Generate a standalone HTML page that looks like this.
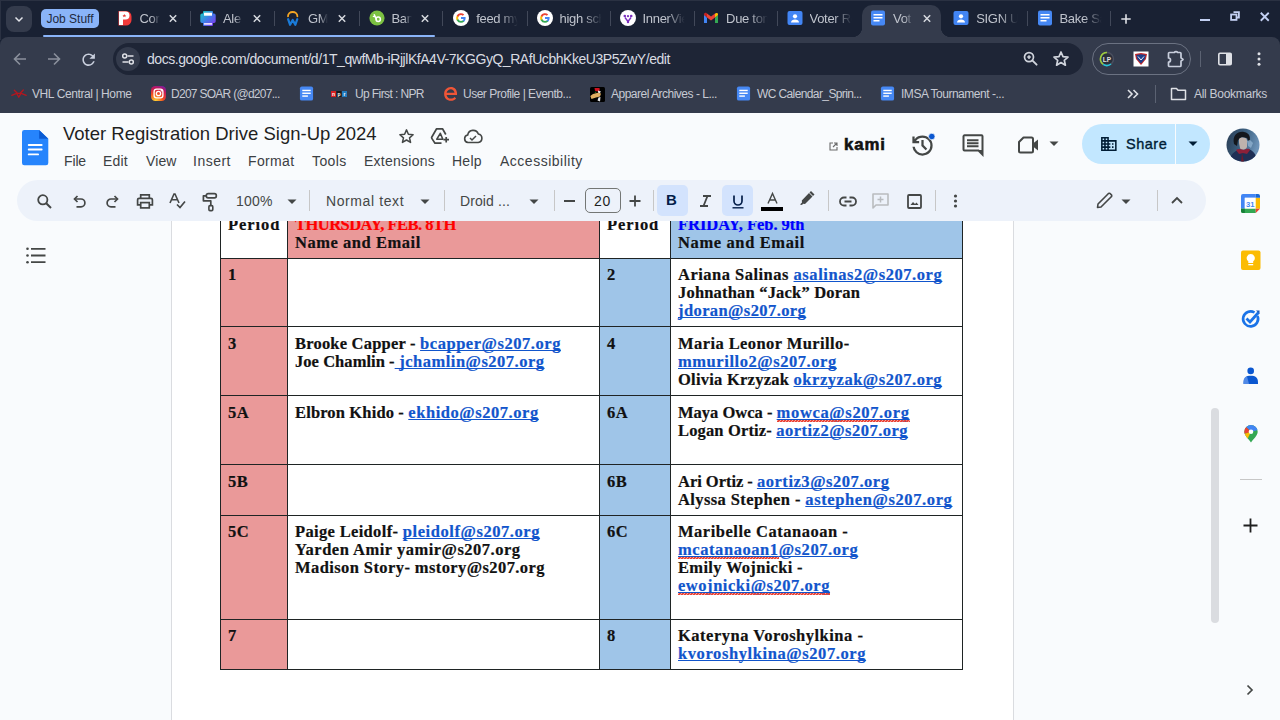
<!DOCTYPE html>
<html><head><meta charset="utf-8">
<style>
*{box-sizing:border-box}
html,body{margin:0;padding:0}
body{width:1280px;height:720px;overflow:hidden;position:relative;background:#f9fbfd;font-family:"Liberation Sans",sans-serif}
.a{position:absolute}
svg{position:absolute;overflow:visible}
#tabs{left:0;top:0;width:1280px;height:45px;background:#192133}
.tt{position:absolute;top:11px;font-size:13px;letter-spacing:-0.3px;color:#bfc3cc;white-space:nowrap;overflow:hidden;line-height:16px}
.fade{-webkit-mask-image:linear-gradient(to right,#000 55%,transparent 95%)}
.sep{position:absolute;top:11px;width:1px;height:15px;background:#414859}
.x{position:absolute;top:11px;width:14px;height:14px}
#tb{left:0;top:37px;width:1280px;height:76px;background:#343b4c;border-top-left-radius:8px;border-top-right-radius:8px}
#omni{left:113px;top:43px;width:970px;height:32px;border-radius:16px;background:#1e2536}
.bm{position:absolute;top:87px;font-size:12px;color:#c7cad3;white-space:nowrap;line-height:15px}
.menu{position:absolute;top:153px;font-size:14px;color:#3c4043;line-height:16px}
#pill{left:17px;top:180px;width:1189px;height:41px;border-radius:21px;background:#edf2fa}
.ic{position:absolute}
.tsep{position:absolute;top:190px;width:1px;height:21px;background:#c7c7c7}
#page{left:171px;top:221px;width:843px;height:499px;background:#fff;border-left:1px solid #dadce0;border-right:1px solid #dadce0}
.doc{font-family:"Liberation Serif",serif;font-weight:bold;font-size:16.5px;letter-spacing:0.62px;color:#111;line-height:18px;white-space:nowrap;-webkit-text-stroke:0.2px currentColor}
.lnk{color:#1155cc;text-decoration:underline;text-decoration-thickness:1px;text-underline-offset:1px;text-decoration-skip-ink:none}
.sq{position:relative}
.sq::after{content:"";position:absolute;left:0;right:0;bottom:-0.5px;height:2px;background:linear-gradient(135deg,transparent 30%,#ea4335 30%,#ea4335 70%,transparent 70%) 0 0/3px 2px repeat-x,linear-gradient(45deg,transparent 30%,#ea4335 30%,#ea4335 70%,transparent 70%) 1.5px 0/3px 2px repeat-x}
</style></head><body>

<!-- TAB STRIP -->
<div id="tabs" class="a">
  <div class="a" style="left:6px;top:6px;width:26px;height:26px;border-radius:8px;background:#343b4c"></div>
  <svg style="left:13px;top:13px" width="12" height="12" viewBox="0 0 12 12"><path d="M2.5 4.5 L6 8 L9.5 4.5" fill="none" stroke="#e3e5ea" stroke-width="1.5"/></svg>
  <div class="a" style="left:41px;top:9px;width:58px;height:19px;border-radius:5px;background:#8ab4f8"></div>
  <div class="a" style="left:41px;top:10px;width:58px;text-align:center;font-size:12px;line-height:18px;color:#1f2a3d">Job Stuff</div>
  <div class="a" style="left:43px;top:35px;width:392px;height:2px;background:#8ab4f8;border-radius:1px"></div>
<!--TABS-->
<div class="a" style="left:862px;top:5px;width:79px;height:32px;background:#343b4c;border-radius:10px 10px 0 0"></div>
<div class="a" style="left:852px;top:27px;width:10px;height:10px;background:radial-gradient(circle at 0 0,transparent 10px,#343b4c 10.5px)"></div>
<div class="a" style="left:941px;top:27px;width:10px;height:10px;background:radial-gradient(circle at 100% 0,transparent 10px,#343b4c 10.5px)"></div>
<div class="a" style="left:116.5px;top:10px;width:16px;height:16px"><svg width="16" height="16" viewBox="0 0 16 16"><path d="M1.5 1H9A5.5 5.500 0 0 1 14.500 6.500V10A5.500 5.500 0 0 1 9 15.500H1.500Z" fill="#f23a3a"/><path d="M2 1.500H8.500A4 4 0 0 1 8.500 9.500H6V15H2Z" fill="#fff"/><path d="M7.300 4L8 5.200H9.300L8.300 6L8.700 7.200L7.300 6.500L6 7.200L6.400 6L5.400 5.200H6.700Z" fill="#e53935"/></svg></div>
<div class="tt fade" style="left:139.5px;width:21px">Cor</div>
<svg class="x" style="left:166.0px" viewBox="0 0 14 14"><path d="M3.8 4.3L10.2 10.7M10.2 4.3L3.8 10.7" stroke="#d5d8de" stroke-width="1.5"/></svg>
<div class="sep" style="left:190px"></div>
<div class="a" style="left:200px;top:10px;width:16px;height:16px"><svg width="16" height="16" viewBox="0 0 16 16"><defs><linearGradient id="ga" x1="0" y1="0" x2="1" y2="1"><stop offset="0" stop-color="#12d6c0"/><stop offset="0.5" stop-color="#3f7be8"/><stop offset="1" stop-color="#8b2cf0"/></linearGradient></defs><path d="M4 1H12A1 1 0 0 1 13 2V3.500H14A1.700 1.700 0 0 1 15.700 5.200V11.300A1.700 1.700 0 0 1 14 13H13V15A1 1 0 0 1 12 16H4A1 1 0 0 1 3 15V13H2A1.700 1.700 0 0 1 0.300 11.300V5.200A1.700 1.700 0 0 1 2 3.500H3V2A1 1 0 0 1 4 1Z" fill="url(#ga)"/><rect x="4" y="2.700" width="8" height="3" fill="#fff"/><rect x="4" y="13" width="8" height="1.800" fill="#e6d8ff"/></svg></div>
<div class="tt fade" style="left:223px;width:21px">Ale</div>
<svg class="x" style="left:249.5px" viewBox="0 0 14 14"><path d="M3.8 4.3L10.2 10.7M10.2 4.3L3.8 10.7" stroke="#d5d8de" stroke-width="1.5"/></svg>
<div class="sep" style="left:274px"></div>
<div class="a" style="left:285px;top:10px;width:16px;height:16px"><svg width="16" height="16" viewBox="0 0 16 16"><path d="M3 6.300A4.700 4.300 0 0 1 12.400 6.300" fill="none" stroke="#f5a623" stroke-width="1.800" stroke-linecap="round"/><path d="M3.100 9.200L5.100 14.800L7.700 10L10.300 14.800L12.300 9.200" fill="none" stroke="#1a7bd8" stroke-width="2.200" stroke-linecap="round" stroke-linejoin="round"/></svg></div>
<div class="tt fade" style="left:308px;width:21px">GM</div>
<svg class="x" style="left:334.5px" viewBox="0 0 14 14"><path d="M3.8 4.3L10.2 10.7M10.2 4.3L3.8 10.7" stroke="#d5d8de" stroke-width="1.5"/></svg>
<div class="sep" style="left:359px"></div>
<div class="a" style="left:368.5px;top:10px;width:16px;height:16px"><svg width="16" height="16" viewBox="0 0 16 16"><circle cx="8" cy="8" r="7.600" fill="#7cc142"/><path d="M5.300 4.800L7.400 9.200" stroke="#fff" stroke-width="1.500" stroke-linecap="round"/><path d="M5.500 6.600L4.300 6.400" stroke="#fff" stroke-width="1.200" stroke-linecap="round"/><circle cx="9.200" cy="9.300" r="2.200" fill="none" stroke="#fff" stroke-width="1.500"/></svg></div>
<div class="tt fade" style="left:391.5px;width:21px">Ban</div>
<svg class="x" style="left:418.0px" viewBox="0 0 14 14"><path d="M3.8 4.3L10.2 10.7M10.2 4.3L3.8 10.7" stroke="#d5d8de" stroke-width="1.5"/></svg>
<div class="sep" style="left:442px"></div>
<div class="a" style="left:453.2px;top:10px;width:16px;height:16px"><svg width="16" height="16" viewBox="0 0 16 16"><circle cx="8" cy="8" r="8" fill="#fff"/><path d="M12.6 8.1c0-.4 0-.7-.1-1H8v1.9h2.6a2.3 2.3 0 0 1-1 1.5v1.2h1.6c.9-.9 1.4-2.1 1.4-3.6z" fill="#4285f4"/><path d="M8 12.8c1.3 0 2.4-.4 3.2-1.2l-1.6-1.2c-.4.3-1 .5-1.6.5-1.2 0-2.3-.8-2.7-2H3.7v1.3A4.8 4.8 0 0 0 8 12.8z" fill="#34a853"/><path d="M5.3 8.9a2.9 2.9 0 0 1 0-1.8V5.8H3.7a4.8 4.8 0 0 0 0 4.4z" fill="#fbbc05"/><path d="M8 5.1c.7 0 1.3.2 1.8.7l1.4-1.4A4.8 4.8 0 0 0 3.7 5.8l1.6 1.3c.4-1.2 1.5-2 2.7-2z" fill="#ea4335"/></svg></div>
<div class="tt fade" style="left:476.2px;width:44px">feed my</div>
<div class="sep" style="left:527px"></div>
<div class="a" style="left:536.5px;top:10px;width:16px;height:16px"><svg width="16" height="16" viewBox="0 0 16 16"><circle cx="8" cy="8" r="8" fill="#fff"/><path d="M12.6 8.1c0-.4 0-.7-.1-1H8v1.9h2.6a2.3 2.3 0 0 1-1 1.5v1.2h1.6c.9-.9 1.4-2.1 1.4-3.6z" fill="#4285f4"/><path d="M8 12.8c1.3 0 2.4-.4 3.2-1.2l-1.6-1.2c-.4.3-1 .5-1.6.5-1.2 0-2.3-.8-2.7-2H3.7v1.3A4.8 4.8 0 0 0 8 12.8z" fill="#34a853"/><path d="M5.3 8.9a2.9 2.9 0 0 1 0-1.8V5.8H3.7a4.8 4.8 0 0 0 0 4.4z" fill="#fbbc05"/><path d="M8 5.1c.7 0 1.3.2 1.8.7l1.4-1.4A4.8 4.8 0 0 0 3.7 5.8l1.6 1.3c.4-1.2 1.5-2 2.7-2z" fill="#ea4335"/></svg></div>
<div class="tt fade" style="left:559.5px;width:44px">high sch</div>
<div class="sep" style="left:610px"></div>
<div class="a" style="left:619.5px;top:10px;width:16px;height:16px"><svg width="16" height="16" viewBox="0 0 16 16"><circle cx="8" cy="8" r="8" fill="#fff"/><circle cx="4.8" cy="6" r="1.3" fill="#7b2fbf"/><circle cx="11.2" cy="6" r="1.3" fill="#7b2fbf"/><circle cx="8" cy="6.2" r="1.1" fill="#7b2fbf"/><path d="M5 7.5L8 11.5L11 7.5" fill="none" stroke="#7b2fbf" stroke-width="1.4"/><circle cx="8" cy="12" r="1.2" fill="#7b2fbf"/></svg></div>
<div class="tt fade" style="left:642.5px;width:44px">InnerVie</div>
<div class="sep" style="left:694px"></div>
<div class="a" style="left:703.1px;top:10px;width:16px;height:16px"><svg width="16" height="16" viewBox="0 0 16 16"><path d="M1 4.5V13h3V7.5z" fill="#4285f4"/><path d="M12 7.5V13h3V4.5z" fill="#34a853"/><path d="M12 3.5v4l3-2.5V4.2c0-1.1-1.3-1.7-2.1-1z" fill="#fbbc04"/><path d="M4 7.5v-4L8 6.5l4-3v4L8 10.5z" fill="#ea4335"/><path d="M1 4.2V5l3 2.5v-4l-.9-.7C2.300 2.500 1 3.100 1 4.200z" fill="#c5221f"/></svg></div>
<div class="tt fade" style="left:726.1px;width:44px">Due tom</div>
<div class="sep" style="left:777px"></div>
<div class="a" style="left:786.5px;top:10px;width:16px;height:16px"><svg width="16" height="16" viewBox="0 0 16 16"><rect x="0.5" y="1" width="15" height="14" rx="2" fill="#4285f4"/><circle cx="8" cy="6.3" r="2.1" fill="#fff"/><path d="M4 12.5c0-2 1.8-3 4-3s4 1 4 3z" fill="#fff"/></svg></div>
<div class="tt fade" style="left:809.5px;width:44px">Voter Re</div>
<div class="a" style="left:870px;top:10px;width:16px;height:16px"><svg width="16" height="16" viewBox="0 0 16 16"><rect x="1" y="0.5" width="14" height="15" rx="2" fill="#4688f4"/><rect x="3.5" y="4" width="9" height="1.5" fill="#fff"/><rect x="3.5" y="7" width="9" height="1.5" fill="#fff"/><rect x="3.5" y="10" width="6" height="1.5" fill="#fff"/></svg></div>
<div class="tt fade" style="left:893px;width:21px">Vot</div>
<svg class="x" style="left:919.5px" viewBox="0 0 14 14"><path d="M3.8 4.3L10.2 10.7M10.2 4.3L3.8 10.7" stroke="#d5d8de" stroke-width="1.5"/></svg>
<div class="a" style="left:953.2px;top:10px;width:16px;height:16px"><svg width="16" height="16" viewBox="0 0 16 16"><rect x="0.5" y="1" width="15" height="14" rx="2" fill="#4285f4"/><circle cx="8" cy="6.3" r="2.1" fill="#fff"/><path d="M4 12.5c0-2 1.8-3 4-3s4 1 4 3z" fill="#fff"/></svg></div>
<div class="tt fade" style="left:976.2px;width:44px">SIGN UP</div>
<div class="sep" style="left:1027px"></div>
<div class="a" style="left:1036.5px;top:10px;width:16px;height:16px"><svg width="16" height="16" viewBox="0 0 16 16"><rect x="1" y="0.5" width="14" height="15" rx="2" fill="#4688f4"/><rect x="3.5" y="4" width="9" height="1.5" fill="#fff"/><rect x="3.5" y="7" width="9" height="1.5" fill="#fff"/><rect x="3.5" y="10" width="6" height="1.5" fill="#fff"/></svg></div>
<div class="tt fade" style="left:1059.5px;width:44px">Bake Sa</div>
<div class="sep" style="left:1110px"></div>
<!--/TABS-->
<div class="a" style="left:0;top:0;width:1280px;height:1px;background:#2a3142"></div>
<div class="a" style="left:0;top:0;width:1px;height:40px;background:#2a3142"></div>

<!-- window controls -->
<svg style="left:1121px;top:13.5px" width="10" height="10" viewBox="0 0 10 10"><path d="M5 0.300V9.700M0.300 5H9.700" stroke="#dfe1e6" stroke-width="1.600"/></svg>
<div class="a" style="left:1200px;top:18.5px;width:10px;height:2px;background:#c3d0f3"></div>
<svg style="left:1230px;top:11px" width="10" height="10" viewBox="0 0 10 10"><path d="M3.500 1.100H8.900V6.500H6.500" fill="none" stroke="#c3d0f3" stroke-width="1.800"/><rect x="1.100" y="3.500" width="5.400" height="5.400" fill="none" stroke="#c3d0f3" stroke-width="1.800"/></svg>
<svg style="left:1260px;top:11.5px" width="9.500" height="9.500" viewBox="0 0 10 10"><path d="M0.800 0.800L9.200 9.200M9.200 0.800L0.800 9.200" stroke="#c3d0f3" stroke-width="1.900"/></svg>
<!--/WIN-->
</div>

<!-- TOOLBAR -->

<div id="tb" class="a"></div>
<div id="omni" class="a"></div>
<!-- nav icons -->
<svg style="left:12px;top:51px" width="16" height="16" viewBox="0 0 16 16"><path d="M14 8H2.5M8 2.5L2.5 8L8 13.5" fill="none" stroke="#8a909c" stroke-width="1.6"/></svg>
<svg style="left:46px;top:51px" width="16" height="16" viewBox="0 0 16 16"><path d="M2 8H13.5M8 2.5L13.5 8L8 13.5" fill="none" stroke="#8a909c" stroke-width="1.6"/></svg>
<svg style="left:81.5px;top:52.5px" width="13.3" height="13.3" viewBox="3.500 3.500 17 17"><path d="M17.650 6.350A7.958 7.958 0 0 0 12 4c-4.420 0-7.990 3.580-7.990 8s3.570 8 7.990 8c3.730 0 6.840-2.550 7.730-6h-2.080A5.990 5.990 0 0 1 12 18c-3.310 0-6-2.690-6-6s2.690-6 6-6c1.660 0 3.140.690 4.220 1.780L13 11h7V4l-2.350 2.350z" fill="#c9cfdd"/></svg>
<div class="a" style="left:116px;top:47px;width:24px;height:24px;border-radius:12px;background:#343b4c"></div>
<svg style="left:121px;top:52px" width="14" height="14" viewBox="0 0 14 14"><path d="M6.500 4H12.500M1.500 10H7.500" stroke="#dfe1e6" stroke-width="1.600"/><circle cx="3.700" cy="4" r="2" fill="none" stroke="#dfe1e6" stroke-width="1.500"/><circle cx="10.300" cy="10" r="2" fill="none" stroke="#dfe1e6" stroke-width="1.500"/></svg>
<div class="a" style="left:147px;top:51px;font-size:14px;letter-spacing:-0.45px;line-height:17px;color:#d9dce2;white-space:nowrap">docs.google.com/document/d/1T_qwfMb-iRjjlKfA4V-7KGGyQ_RAfUcbhKkeU3P5ZwY/edit</div>
<svg style="left:1021px;top:50px" width="18" height="18" viewBox="0 0 18 18"><circle cx="8" cy="7.100" r="4.500" fill="none" stroke="#d0d4dc" stroke-width="1.700"/><path d="M11.300 10.400L15.600 14.700" stroke="#d0d4dc" stroke-width="1.900" stroke-linecap="round"/><path d="M8 5.300V8.900M6.200 7.100H9.800" stroke="#d0d4dc" stroke-width="1.500"/></svg>
<svg style="left:1051.5px;top:50.3px" width="18" height="18" viewBox="0 0 18 18"><path d="M9 2L11 6.600L16 7.100L12.300 10.300L13.400 15.200L9 12.600L4.600 15.200L5.700 10.300L2 7.100L7 6.600Z" fill="none" stroke="#d0d4dc" stroke-width="1.700" stroke-linejoin="round"/></svg>
<div class="a" style="left:1092px;top:43px;width:99px;height:32px;border-radius:16px;border:1px solid #6b7282"></div>
<svg style="left:1099px;top:51px" width="16" height="16" viewBox="0 0 16 16"><circle cx="8" cy="8" r="6.5" fill="#2a2f3a" stroke="#4b5060" stroke-width="1.4"/><path d="M8 1.5A6.5 6.5 0 0 0 4.2 13.3" fill="none" stroke="#9ccc3c" stroke-width="1.6"/><path d="M4.2 13.3A6.5 6.5 0 0 0 12 13" fill="none" stroke="#26c6da" stroke-width="1.6"/><text x="8" y="10.5" font-size="6.5" font-family="Liberation Sans" font-weight="bold" fill="#e0e0e0" text-anchor="middle">LP</text></svg>
<svg style="left:1133px;top:51px" width="16" height="16" viewBox="0 0 16 16"><rect x="0.5" y="0.5" width="15" height="15" fill="#fff"/><path d="M2 3L8 2L14 3L13 8L8 14L3 8Z" fill="#c62828"/><path d="M3.3 4L8 3.2L12.7 4L11.8 8L8 12.5L4.2 8Z" fill="#1e3f8a"/><path d="M5 5.5L8 9L11 5.5" fill="none" stroke="#fff" stroke-width="0.9"/></svg>
<svg style="left:1166px;top:50px" width="18" height="18" viewBox="0 0 18 18"><path d="M3.500 2.500H8.300A2 2 0 0 1 11.700 2.500H14A1 1 0 0 1 15 3.500V7.800L17 9.500L15 11.200V15.500A1 1 0 0 1 14 16.500H3.500A1 1 0 0 1 2.500 15.500V12A1.600 1.600 0 0 0 2.500 8V3.500A1 1 0 0 1 3.500 2.500Z" fill="none" stroke="#c9cfdd" stroke-width="1.700" stroke-linejoin="round"/></svg>
<div class="a" style="left:1200px;top:51px;width:1px;height:16px;background:#5b6272"></div>
<svg style="left:1217px;top:51px" width="16" height="16" viewBox="0 0 16 16"><rect x="1.8" y="2.3" width="12.4" height="11.4" rx="1.2" fill="none" stroke="#dfe1e6" stroke-width="1.6"/><rect x="9" y="2.3" width="5.2" height="11.4" fill="#dfe1e6"/></svg>
<svg style="left:1251px;top:51px" width="16" height="16" viewBox="0 0 16 16"><circle cx="8" cy="2.8" r="1.5" fill="#dfe1e6"/><circle cx="8" cy="8" r="1.5" fill="#dfe1e6"/><circle cx="8" cy="13.2" r="1.5" fill="#dfe1e6"/></svg>
<!--BM-->
<div class="a" style="left:11px;top:86px;width:16px;height:16px"><svg width="16" height="16" viewBox="0 0 16 16"><path d="M3.300 4.300L6.300 7.300M12.300 4L9.300 7.300M0.800 9.300L5.600 7.400M15.200 9.300L10.200 7.400" stroke="#b5161e" stroke-width="1.300" stroke-linecap="round"/><path d="M5.600 7.300H10L7.800 11.300Z" fill="none" stroke="#b5161e" stroke-width="1.300" stroke-linejoin="round"/></svg></div>
<div class="bm" style="left:32px;letter-spacing:-0.4px">VHL Central | Home</div>
<div class="a" style="left:151px;top:86px;width:16px;height:16px"><svg width="15" height="15" viewBox="0 0 16 16"><defs><radialGradient id="gi" cx="0.3" cy="1" r="1.1"><stop offset="0" stop-color="#fdd835"/><stop offset="0.45" stop-color="#f4511e"/><stop offset="0.8" stop-color="#c2185b"/><stop offset="1" stop-color="#7b1fa2"/></radialGradient></defs><rect x="0" y="0" width="16" height="16" rx="4.5" fill="url(#gi)"/><rect x="3.3" y="3.3" width="9.4" height="9.4" rx="2.8" fill="none" stroke="#fff" stroke-width="1.4"/><circle cx="8" cy="8" r="2.3" fill="none" stroke="#fff" stroke-width="1.4"/><circle cx="11" cy="5" r=".8" fill="#fff"/></svg></div>
<div class="bm" style="left:171px;letter-spacing:-0.72px">D207 SOAR (@d207...</div>
<div class="a" style="left:299px;top:86px;width:16px;height:16px"><svg width="15" height="15" viewBox="0 0 16 16"><rect x="1" y="0.5" width="14" height="15" rx="2" fill="#4688f4"/><rect x="3.5" y="4" width="9" height="1.5" fill="#fff"/><rect x="3.5" y="7" width="9" height="1.5" fill="#fff"/><rect x="3.5" y="10" width="6" height="1.5" fill="#fff"/></svg></div>
<div class="a" style="left:331px;top:86px;width:16px;height:16px"><svg width="16" height="16" viewBox="0 0 16 16"><rect x="0" y="5" width="5" height="6" fill="#d62021"/><rect x="5.5" y="5" width="5" height="6" fill="#1a1a1a"/><rect x="11" y="5" width="5" height="6" fill="#237bbd"/><text x="2.5" y="9.8" font-size="5" fill="#fff" font-family="Liberation Sans" text-anchor="middle" font-weight="bold">n</text><text x="8" y="9.8" font-size="5" fill="#fff" font-family="Liberation Sans" text-anchor="middle" font-weight="bold">p</text><text x="13.5" y="9.8" font-size="5" fill="#fff" font-family="Liberation Sans" text-anchor="middle" font-weight="bold">r</text></svg></div>
<div class="bm" style="left:355px;letter-spacing:-0.6px">Up First : NPR</div>
<div class="a" style="left:443px;top:86px;width:16px;height:16px"><svg width="15" height="15" viewBox="0 0 16 16"><path d="M13.5 9.5H3.8C4.3 12 6.2 13.4 8.4 13.4C10 13.4 11.3 12.7 12.3 11.6L14 13.2C12.6 14.8 10.6 15.7 8.4 15.7C4.3 15.7 1.2 12.6 1.2 8.4S4.300 1.100 8.400 1.100C12.300 1.100 15 4 15 8.300C15 8.700 15 9.100 14.900 9.500ZM3.8 7.3H12.300C11.800 4.900 10.300 3.500 8.300 3.500S4.500 4.900 3.800 7.300Z" fill="#f05537"/></svg></div>
<div class="bm" style="left:463px;letter-spacing:-0.49px">User Profile | Eventb...</div>
<div class="a" style="left:590px;top:86.5px;width:16px;height:16px"><svg width="15" height="15" viewBox="0 0 15 15"><rect x="0" y="0" width="15" height="15" rx="1.500" fill="#000"/><path d="M4.500 1L9.500 1L9.800 3.500L7.500 4.500L5 3.800Z" fill="#d0101e"/><path d="M4.500 5L6.500 4.500L6 6Z" fill="#3c8a2e"/><path d="M8 3.500L11 4.500L9.500 6.500L8 5.500Z" fill="#e8e8e8"/><path d="M0.300 9L3 7L8 5.800L11 6.500L10 9.500L6 10.500L1.500 12Z" fill="#e0ae62"/><path d="M8.500 10.500L10.500 10L10 14.500L7.500 13.500Z" fill="#e8e8e8"/></svg></div>
<div class="bm" style="left:611px;letter-spacing:-0.5px">Apparel Archives - L...</div>
<div class="a" style="left:736px;top:86px;width:16px;height:16px"><svg width="15" height="15" viewBox="0 0 16 16"><rect x="1" y="0.5" width="14" height="15" rx="2" fill="#4688f4"/><rect x="3.5" y="4" width="9" height="1.5" fill="#fff"/><rect x="3.5" y="7" width="9" height="1.5" fill="#fff"/><rect x="3.5" y="10" width="6" height="1.5" fill="#fff"/></svg></div>
<div class="bm" style="left:757px;letter-spacing:-0.61px">WC Calendar_Sprin...</div>
<div class="a" style="left:880px;top:86px;width:16px;height:16px"><svg width="15" height="15" viewBox="0 0 16 16"><rect x="1" y="0.5" width="14" height="15" rx="2" fill="#4688f4"/><rect x="3.5" y="4" width="9" height="1.5" fill="#fff"/><rect x="3.5" y="7" width="9" height="1.5" fill="#fff"/><rect x="3.5" y="10" width="6" height="1.5" fill="#fff"/></svg></div>
<div class="bm" style="left:901px;letter-spacing:-0.47px">IMSA Tournament -...</div>
<svg style="left:1126px;top:88px" width="14" height="12" viewBox="0 0 14 12"><path d="M2 2L6 6L2 10M7.5 2L11.5 6L7.5 10" fill="none" stroke="#dfe1e6" stroke-width="1.6"/></svg>
<div class="a" style="left:1155px;top:85px;width:1px;height:18px;background:#5b6272"></div>
<svg style="left:1170px;top:86px" width="17" height="16" viewBox="0 0 17 16"><path d="M1.5 2.5H6.5L8 4.2H15.5V13.5H1.5Z" fill="none" stroke="#dfe1e6" stroke-width="1.5" stroke-linejoin="round"/></svg>
<div class="bm" style="left:1194px;letter-spacing:-0.28px">All Bookmarks</div>
<!--/BM-->

<!-- DOCS HEADER -->
<svg style="left:22px;top:129.5px" width="26.3" height="35.2" viewBox="0 0 26.3 35.2"><path d="M2.300 0H17.100L26.300 8.700V32.900A2.300 2.300 0 0 1 24 35.200H2.300A2.300 2.300 0 0 1 0 32.900V2.300A2.300 2.300 0 0 1 2.300 0Z" fill="#2684fc"/><path d="M17.100 0L26.300 8.700H17.100Z" fill="#0b5bd3"/><rect x="5.800" y="14.100" width="14.800" height="1.900" rx="0.900" fill="#fff"/><rect x="5.800" y="18.600" width="14.800" height="1.900" rx="0.900" fill="#fff"/><rect x="5.800" y="23.400" width="11.200" height="1.900" rx="0.900" fill="#fff"/></svg>
<div class="a" style="left:63px;top:123px;font-size:18.5px;line-height:22px;color:#1f1f1f;white-space:nowrap">Voter Registration Drive Sign-Up 2024</div>
<svg style="left:398px;top:128px" width="17" height="17" viewBox="0 0 18 18"><path d="M9 2L11 6.6L16 7.1L12.2 10.4L13.3 15.300L9 12.700L4.700 15.300L5.800 10.400L2 7.100L7 6.600Z" fill="none" stroke="#444746" stroke-width="1.6" stroke-linejoin="round"/></svg>
<svg style="left:430px;top:126px" width="20" height="20" viewBox="0 0 20 20"><path d="M15.800 8.500L12.500 2.800H6.600L1.700 11.200Q1.400 11.800 1.800 12.400L5 17.200H11.500" fill="none" stroke="#444746" stroke-width="1.700" stroke-linejoin="round"/><path d="M10.300 7.300L6.800 13.200H12.800Z" fill="none" stroke="#444746" stroke-width="1.600" stroke-linejoin="round"/><path d="M16.200 10.900V16.500M13.400 13.700H19" stroke="#444746" stroke-width="1.700"/></svg>
<svg style="left:463px;top:127px" width="20" height="18" viewBox="0 0 20 18"><path d="M5 15.5A3.8 3.800 0 0 1 4.700 8A5.500 5.500 0 0 1 15.300 7A4.300 4.300 0 0 1 15.200 15.500Z" fill="none" stroke="#444746" stroke-width="1.6" stroke-linejoin="round"/><path d="M7 11L9 13L13 9" fill="none" stroke="#444746" stroke-width="1.5"/></svg>
<div class="menu" style="left:64px;letter-spacing:-0.14px">File</div>
<div class="menu" style="left:103px;letter-spacing:0.17px">Edit</div>
<div class="menu" style="left:146px;letter-spacing:0.1px">View</div>
<div class="menu" style="left:193px;letter-spacing:0.5px">Insert</div>
<div class="menu" style="left:248px;letter-spacing:0.34px">Format</div>
<div class="menu" style="left:312px;letter-spacing:0.4px">Tools</div>
<div class="menu" style="left:364px;letter-spacing:0.26px">Extensions</div>
<div class="menu" style="left:452px;letter-spacing:0.25px">Help</div>
<div class="menu" style="left:500px;letter-spacing:0.51px">Accessibility</div>
<svg style="left:829px;top:142px" width="9" height="9" viewBox="0 0 9 9"><path d="M4 1H1V8H8V5M5 1H8V4M8 1L4 5" fill="none" stroke="#6b6b6b" stroke-width="1.1"/></svg>
<div class="a" style="left:844px;top:135px;font-size:16.8px;font-weight:bold;line-height:20px;color:#111;letter-spacing:0.9px;-webkit-text-stroke:0.6px #111">kami</div>
<svg style="left:909.4px;top:131.9px" width="27" height="27" viewBox="0 -960 960 960"><path d="M480-120q-138 0-240.500-91.500T122-440h82q14 104 92.500 172T480-200q117 0 198.500-81.500T760-480q0-117-81.500-198.500T480-760q-69 0-129 32t-101 88h110v80H120v-240h80v94q51-64 124.500-99T480-840q75 0 140.500 28.500t114 77q48.500 48.500 77 114T840-480q0 75-28.500 140.500t-77 114q-48.500 48.500-114 77T480-120Zm112-192L440-464v-216h80v184l128 128-56 56Z" fill="#444746"/><circle cx="810" cy="-800" r="115" fill="#0b57d0" stroke="#f9fbfd" stroke-width="25"/></svg>
<svg style="left:962px;top:134px" width="23" height="22" viewBox="0 0 23 22"><path d="M2.500 1.300H19.500A1 1 0 0 1 20.500 2.300V20.500L16.500 16.500H2.500A1 1 0 0 1 1.500 15.500V2.300A1 1 0 0 1 2.500 1.300Z" fill="none" stroke="#444746" stroke-width="2"/><path d="M16 16L21 21V16Z" fill="#444746"/><path d="M5 6.200H16.500M5 9.200H16.500M5 12.200H16.500" stroke="#444746" stroke-width="1.900"/></svg>
<svg style="left:1017px;top:136px" width="25" height="18" viewBox="0 0 25 18"><path d="M6.500 1.500H14.500A1.500 1.500 0 0 1 16 3V15A1.500 1.500 0 0 1 14.500 16.500H3.500A1.500 1.500 0 0 1 2 15V6Z" fill="none" stroke="#444746" stroke-width="2" stroke-linejoin="round"/><path d="M16 7.500L21 3.500V14.500L16 10.500Z" fill="#444746"/></svg>
<svg style="left:1049px;top:141px" width="10" height="6" viewBox="0 0 10 6"><path d="M0.5 0.5H9.500L5 5Z" fill="#444746"/></svg>
<div class="a" style="left:1082px;top:124px;width:128px;height:40px;border-radius:20px;background:#c2e7ff"></div>
<div class="a" style="left:1175px;top:124px;width:1px;height:40px;background:#f9fbfd"></div>
<svg style="left:1101px;top:137px" width="15.7" height="14" viewBox="2 3 20 18"><path d="M12 7V3H2v18h20V7H12zM6 19H4v-2h2v2zm0-4H4v-2h2v2zm0-4H4V9h2v2zm0-4H4V5h2v2zm4 12H8v-2h2v2zm0-4H8v-2h2v2zm0-4H8V9h2v2zm0-4H8V5h2v2zm10 12h-8v-2h2v-2h-2v-2h2v-2h-2V9h8v10zm-2-8h-2v2h2v-2zm0 4h-2v2h2v-2z" fill="#001d35"/></svg>
<div class="a" style="left:1126px;top:135px;font-size:14.5px;line-height:18px;color:#001d35;letter-spacing:0.5px;-webkit-text-stroke:0.35px #001d35">Share</div>
<svg style="left:1188px;top:141px" width="10" height="6" viewBox="0 0 10 6"><path d="M0.500 0.500H9.500L5 5Z" fill="#001d35"/></svg>
<svg style="left:1226px;top:128px" width="34" height="34" viewBox="0 0 34 34"><defs><clipPath id="av"><circle cx="17" cy="17" r="16.500"/></clipPath><linearGradient id="avg" x1="0" y1="0" x2="1" y2="0.3"><stop offset="0" stop-color="#27384f"/><stop offset="0.6" stop-color="#3f6485"/><stop offset="1" stop-color="#6d93b8"/></linearGradient></defs><g clip-path="url(#av)"><rect width="34" height="34" fill="url(#avg)"/><path d="M8 16C6 7 12 3 18 4C24 5 25 10 23 15L21 10L16 9L12 12L11 18Z" fill="#14171d"/><path d="M13 11C15 9 20 9 21 12L21 19C20 22 15 23 14 20L13 15Z" fill="#bfb2ad"/><path d="M21 13L24 12L27 15L25 20L22 18Z" fill="#8fb0cf" opacity="0.8"/><path d="M3 34C4 27 8 23 13 22L17 24L22 21C27 22 31 27 31 34Z" fill="#1f2f55"/><path d="M10 22C13 20 17 22 18 22C20 21 23 20 24 22L21 26L17 25L13 26Z" fill="#8c2039"/><path d="M16 25L18 34H15Z" fill="#6b1a2c"/></g></svg>
<!-- DOCS PAGE -->
<div id="page" class="a"></div>
<div id="pill" class="a"></div>
<svg style="left:37px;top:194px" width="15" height="15" viewBox="0 0 15 15"><circle cx="5.800" cy="5.800" r="4.600" fill="none" stroke="#444746" stroke-width="1.8"/><path d="M9.200 9.200L14 14" stroke="#444746" stroke-width="2"/></svg>
<svg style="left:73px;top:195px" width="13" height="13" viewBox="0 0 13 13"><path d="M4.500 1L1.500 4L4.500 7" fill="none" stroke="#444746" stroke-width="1.7"/><path d="M1.800 4H8A3.900 3.900 0 0 1 8 11.800H3.500" fill="none" stroke="#444746" stroke-width="1.7"/></svg>
<svg style="left:106px;top:195px" width="13" height="13" viewBox="0 0 13 13"><path d="M8.500 1L11.500 4L8.500 7" fill="none" stroke="#444746" stroke-width="1.7"/><path d="M11.200 4H5A3.900 3.900 0 0 0 5 11.800H9.500" fill="none" stroke="#444746" stroke-width="1.7"/></svg>
<svg style="left:136px;top:193px" width="18" height="16" viewBox="0 0 18 16"><path d="M4.700 5V1.800H13.300V5" fill="none" stroke="#444746" stroke-width="1.700"/><path d="M4 11.800H1.600V6.800A1.500 1.500 0 0 1 3.100 5.300H14.900A1.500 1.500 0 0 1 16.400 6.800V11.800H14" fill="none" stroke="#444746" stroke-width="1.700"/><rect x="4.700" y="9.600" width="8.600" height="5.300" fill="none" stroke="#444746" stroke-width="1.700"/></svg>
<svg style="left:169px;top:193px" width="17" height="16" viewBox="0 0 17 16"><path d="M1 10L5 1H6L10 10M2.500 6.800H8.500" fill="none" stroke="#444746" stroke-width="1.6"/><path d="M8 11.500L11 14.500L16 8.500" fill="none" stroke="#444746" stroke-width="1.700"/></svg>
<svg style="left:201px;top:192px" width="17" height="20" viewBox="0 0 17 20"><rect x="5.300" y="1.600" width="10" height="4.300" rx="1.800" fill="none" stroke="#444746" stroke-width="1.700"/><path d="M5.300 3.800H2.400V8.800H9.800V13.300" fill="none" stroke="#444746" stroke-width="1.700" stroke-linejoin="round"/><rect x="7.900" y="13.600" width="3.900" height="5" rx="1.100" fill="none" stroke="#444746" stroke-width="1.600"/></svg>
<div class="a" style="left:236px;top:193px;font-size:14px;line-height:17px;color:#444746;letter-spacing:0.25px">100%</div>
<svg style="left:287px;top:199px" width="10" height="6" viewBox="0 0 10 6"><path d="M0.500 0.500H9.500L5 5Z" fill="#444746"/></svg>
<div class="tsep" style="left:309px"></div>
<div class="a" style="left:326px;top:193px;font-size:14px;line-height:17px;color:#444746;letter-spacing:0.6px">Normal text</div>
<svg style="left:420px;top:199px" width="10" height="6" viewBox="0 0 10 6"><path d="M0.500 0.500H9.500L5 5Z" fill="#444746"/></svg>
<div class="tsep" style="left:444px"></div>
<div class="a" style="left:460px;top:193px;font-size:14px;line-height:17px;color:#444746;letter-spacing:0.1px">Droid ...</div>
<svg style="left:529px;top:199px" width="10" height="6" viewBox="0 0 10 6"><path d="M0.500 0.500H9.500L5 5Z" fill="#444746"/></svg>
<div class="tsep" style="left:554px"></div>
<div class="a" style="left:564px;top:200px;width:11px;height:2px;background:#444746"></div>
<div class="a" style="left:585px;top:188px;width:36px;height:25px;border:1px solid #747775;border-radius:5px"></div>
<div class="a" style="left:594px;top:193px;font-size:14px;line-height:17px;color:#1f1f1f;letter-spacing:0.6px">20</div>
<svg style="left:629px;top:195px" width="12" height="12" viewBox="0 0 12 12"><path d="M6 0.500V11.500M0.500 6H11.500" stroke="#444746" stroke-width="1.800"/></svg>
<div class="tsep" style="left:653px"></div>
<div class="a" style="left:657px;top:185px;width:31px;height:31px;border-radius:5px;background:#d3e3fd"></div>
<div class="a" style="left:666px;top:191px;font-size:15px;font-weight:bold;line-height:18px;color:#041e49">B</div>
<svg style="left:699px;top:195px" width="13" height="12" viewBox="0 0 13 12"><path d="M4 1H12M1 11H9M8.500 1L4.500 11" fill="none" stroke="#444746" stroke-width="1.800"/></svg>
<div class="a" style="left:722px;top:185px;width:31px;height:31px;border-radius:5px;background:#d3e3fd"></div>
<svg style="left:732px;top:195px" width="12" height="14" viewBox="0 0 12 14"><path d="M2 0.500V6A4 4 0 0 0 10 6V0.500" fill="none" stroke="#041e49" stroke-width="1.700"/><path d="M0.500 12.800H11.500" stroke="#041e49" stroke-width="1.400"/></svg>
<svg style="left:767px;top:193px" width="11" height="11" viewBox="0 0 11 11"><path d="M1 10.500L5.500 0.500L10 10.500M2.500 7H8.500" fill="none" stroke="#444746" stroke-width="1.400"/></svg>
<div class="a" style="left:761px;top:207px;width:22px;height:3.5px;background:#000"></div>
<svg style="left:799px;top:191px" width="16" height="15" viewBox="0 0 16 15"><path d="M1 13.500L3 11.500L2.800 9.500L10 2L13.500 5.500L6 13L4 12.800L3 14Z" fill="#444746"/><path d="M10.500 1.500L12 0L15.500 3.500L14 5" fill="#444746"/></svg>
<div class="tsep" style="left:828px"></div>
<svg style="left:839px;top:196px" width="18" height="11" viewBox="0 0 18 11"><path d="M7.500 1.500H5A4 4 0 0 0 5 9.500H7.500M10.500 1.500H13A4 4 0 0 1 13 9.500H10.500M5.500 5.500H12.500" fill="none" stroke="#444746" stroke-width="1.800"/></svg>
<svg style="left:872px;top:193px" width="17" height="16" viewBox="0 0 17 16"><path d="M1 1H16V12H4L1 15Z" fill="none" stroke="#b9bcbf" stroke-width="1.600" stroke-linejoin="round"/><path d="M8.500 3.500V9.500M5.500 6.500H11.500" stroke="#b9bcbf" stroke-width="1.500"/></svg>
<svg style="left:907px;top:194px" width="15" height="15" viewBox="0 0 15 15"><rect x="1" y="1" width="13" height="13" rx="1" fill="none" stroke="#444746" stroke-width="1.800"/><path d="M3.500 11L6 8L8 10L9.500 8.500L11.500 11Z" fill="#444746"/></svg>
<div class="tsep" style="left:935px"></div>
<svg style="left:953px;top:194px" width="5" height="14" viewBox="0 0 5 14"><circle cx="2.500" cy="2" r="1.600" fill="#444746"/><circle cx="2.500" cy="7" r="1.600" fill="#444746"/><circle cx="2.500" cy="12" r="1.600" fill="#444746"/></svg>
<svg style="left:1096px;top:192px" width="17" height="17" viewBox="0 0 17 17"><path d="M1.500 15.500L2 12L12 2A1.400 1.400 0 0 1 14.500 2L15 2.500A1.400 1.400 0 0 1 15 5L5 15Z" fill="none" stroke="#444746" stroke-width="1.600" stroke-linejoin="round"/></svg>
<svg style="left:1121px;top:199px" width="10" height="6" viewBox="0 0 10 6"><path d="M0.500 0.500H9.500L5 5Z" fill="#444746"/></svg>
<div class="tsep" style="left:1157px"></div>
<svg style="left:1171px;top:196px" width="12" height="8" viewBox="0 0 12 8"><path d="M1 7L6 2L11 7" fill="none" stroke="#444746" stroke-width="1.800"/></svg>
<svg style="left:26px;top:247px" width="20" height="17" viewBox="0 0 20 17"><circle cx="1.500" cy="1.800" r="1.300" fill="#444746"/><circle cx="1.500" cy="8.500" r="1.300" fill="#444746"/><circle cx="1.500" cy="15.200" r="1.300" fill="#444746"/><path d="M5 1.800H19.500M5 8.500H19.500M5 15.200H19.500" stroke="#444746" stroke-width="1.800"/></svg>
<svg style="left:1241.2px;top:194px" width="19" height="19" viewBox="0 0 20 20"><path d="M15.500 0H2A2 2 0 0 0 0 2V15.500H4V4H15.500Z" fill="#4285f4"/><rect x="4" y="4" width="11.500" height="11.500" fill="#fff"/><path d="M15.500 4H20V15.500H15.500Z" fill="#fbbc04"/><path d="M0 15.500H15.500V20H2A2 2 0 0 1 0 18Z" fill="#34a853"/><path d="M15.500 15.500H20L15.500 20Z" fill="#ea4335"/><path d="M15.500 0H18A2 2 0 0 1 20 2V4H15.500Z" fill="#1967d2"/><path d="M0 15.500H4V20H2A2 2 0 0 1 0 18Z" fill="#188038"/><text x="9.800" y="13.300" font-size="8" font-family="Liberation Sans" font-weight="bold" fill="#4285f4" text-anchor="middle">31</text></svg>
<svg style="left:1241px;top:250px" width="20" height="21" viewBox="0 0 20 21"><rect x="0" y="0.500" width="19.500" height="19.500" rx="2" fill="#fbbc04"/><path d="M9.750 4A4 4 0 0 1 12.200 11.200V13H7.300V11.200A4 4 0 0 1 9.750 4Z" fill="#fff"/><rect x="7.300" y="14" width="4.900" height="1.300" fill="#fff"/></svg>
<svg style="left:1241px;top:309px" width="20" height="20" viewBox="0 0 20 20"><path d="M16.500 7A7.500 7.500 0 1 1 13.500 3.500" fill="none" stroke="#1a73e8" stroke-width="2.600"/><path d="M5.500 9.500L9 13L17.500 3.500" fill="none" stroke="#1a73e8" stroke-width="2.800"/><path d="M15 1.500L18.500 1.500L18.500 5Z" fill="#185abc"/></svg>
<svg style="left:1243px;top:366px" width="16" height="19" viewBox="0 0 16 19"><circle cx="7.700" cy="4.900" r="3.300" fill="#0b57d0"/><path d="M0.500 16.500C0.500 11.500 3 9.800 7.700 9.800S15 11.500 15 16.500V18H0.500Z" fill="#0b57d0"/><path d="M0.500 16.500C0.500 12.500 2 10.800 4 10.200L6 18H0.500Z" fill="#6d9ef0" opacity="0.7"/></svg>
<svg style="left:1244px;top:425px" width="14" height="18" viewBox="0 0 14 18"><defs><clipPath id="pin"><path d="M7 17.500C5.500 14.500 0.300 11 0.300 6.700A6.700 6.700 0 0 1 13.700 6.700C13.700 11 8.500 14.500 7 17.500Z"/></clipPath></defs><g clip-path="url(#pin)"><rect width="14" height="18" fill="#34a853"/><path d="M0 0H14V5L7 6.700L2 2Z" fill="#4285f4"/><path d="M0 0L7 6.700L0 9Z" fill="#ea4335"/><path d="M0 9L7 6.700L3.500 14L0 12Z" fill="#fbbc04"/></g><circle cx="7" cy="6.700" r="2.300" fill="#fff"/></svg>
<div class="a" style="left:1240px;top:479px;width:22px;height:1px;background:#c7c7c7"></div>
<svg style="left:1243px;top:518px" width="15" height="15" viewBox="0 0 15 15"><path d="M7.500 0.500V14.500M0.500 7.500H14.500" stroke="#1f1f1f" stroke-width="1.800"/></svg>
<svg style="left:1246px;top:684px" width="8" height="12" viewBox="0 0 8 12"><path d="M1.500 1.500L6 6L1.500 10.500" fill="none" stroke="#444746" stroke-width="1.700"/></svg>
<div class="a" style="left:1211px;top:408px;width:8px;height:215px;border-radius:4px;background:#dadce0"></div>
<!--TABLE-->
<div class="a" style="left:0;top:221px;width:1014px;height:499px;overflow:hidden">
<div class="a" style="left:287px;top:-14px;width:312px;height:51px;background:#ea9999"></div>
<div class="a" style="left:670px;top:-14px;width:292px;height:51px;background:#9fc5e8"></div>
<div class="a" style="left:220px;top:37px;width:67px;height:68px;background:#ea9999"></div>
<div class="a" style="left:599px;top:37px;width:71px;height:68px;background:#9fc5e8"></div>
<div class="a" style="left:220px;top:105px;width:67px;height:69px;background:#ea9999"></div>
<div class="a" style="left:599px;top:105px;width:71px;height:69px;background:#9fc5e8"></div>
<div class="a" style="left:220px;top:174px;width:67px;height:69px;background:#ea9999"></div>
<div class="a" style="left:599px;top:174px;width:71px;height:69px;background:#9fc5e8"></div>
<div class="a" style="left:220px;top:243px;width:67px;height:51px;background:#ea9999"></div>
<div class="a" style="left:599px;top:243px;width:71px;height:51px;background:#9fc5e8"></div>
<div class="a" style="left:220px;top:294px;width:67px;height:104px;background:#ea9999"></div>
<div class="a" style="left:599px;top:294px;width:71px;height:104px;background:#9fc5e8"></div>
<div class="a" style="left:220px;top:398px;width:67px;height:50px;background:#ea9999"></div>
<div class="a" style="left:599px;top:398px;width:71px;height:50px;background:#9fc5e8"></div>
<div class="a" style="left:220px;top:-14px;width:1px;height:463px;background:#1f2424"></div>
<div class="a" style="left:287px;top:-14px;width:1px;height:463px;background:#1f2424"></div>
<div class="a" style="left:599px;top:-14px;width:1px;height:463px;background:#1f2424"></div>
<div class="a" style="left:670px;top:-14px;width:1px;height:463px;background:#1f2424"></div>
<div class="a" style="left:962px;top:-14px;width:1px;height:463px;background:#1f2424"></div>
<div class="a" style="left:220px;top:-14px;width:743px;height:1px;background:#1f2424"></div>
<div class="a" style="left:220px;top:37px;width:743px;height:1px;background:#1f2424"></div>
<div class="a" style="left:220px;top:105px;width:743px;height:1px;background:#1f2424"></div>
<div class="a" style="left:220px;top:174px;width:743px;height:1px;background:#1f2424"></div>
<div class="a" style="left:220px;top:243px;width:743px;height:1px;background:#1f2424"></div>
<div class="a" style="left:220px;top:294px;width:743px;height:1px;background:#1f2424"></div>
<div class="a" style="left:220px;top:398px;width:743px;height:1px;background:#1f2424"></div>
<div class="a" style="left:220px;top:448px;width:743px;height:1px;background:#1f2424"></div>
<div class="a doc" style="left:228px;top:-5.5px"><span style="letter-spacing:0.94px">Period</span></div>
<div class="a doc" style="left:295px;top:-5.5px"><span style="letter-spacing:-0.531px"><span style="color:#ff0000">THURSDAY, FEB. 8TH</span></span></div>
<div class="a doc" style="left:295px;top:12.5px"><span style="letter-spacing:0.543px">Name and Email</span></div>
<div class="a doc" style="left:607px;top:-5.5px"><span style="letter-spacing:0.9px">Period</span></div>
<div class="a doc" style="left:678px;top:-5.5px"><span style="letter-spacing:-0.046px"><span style="color:#0000ff">FRIDAY, Feb. 9th</span></span></div>
<div class="a doc" style="left:678px;top:12.5px"><span style="letter-spacing:0.62px">Name and Email</span></div>
<div class="a doc" style="left:228px;top:44.80000000000001px"><span style="letter-spacing:0.62px">1</span></div>
<div class="a doc" style="left:607px;top:44.80000000000001px"><span style="letter-spacing:0.62px">2</span></div>
<div class="a doc" style="left:678px;top:44.80000000000001px"><span style="letter-spacing:0.488px">Ariana Salinas </span><span style="letter-spacing:0.563px"><span class="lnk">asalinas2@s207.org</span></span></div>
<div class="a doc" style="left:678px;top:62.80000000000001px"><span style="letter-spacing:0.191px">Johnathan “Jack” Doran</span></div>
<div class="a doc" style="left:678px;top:80.80000000000001px"><span style="letter-spacing:0.406px"><span class="lnk">jdoran@s207.org</span></span></div>
<div class="a doc" style="left:228px;top:113.5px"><span style="letter-spacing:0.62px">3</span></div>
<div class="a doc" style="left:607px;top:113.5px"><span style="letter-spacing:0.62px">4</span></div>
<div class="a doc" style="left:295px;top:113.5px"><span style="letter-spacing:0.205px">Brooke Capper - </span><span style="letter-spacing:0.54px"><span class="lnk">bcapper@s207.org</span></span></div>
<div class="a doc" style="left:295px;top:131.5px"><span style="letter-spacing:0.05px">Joe Chamlin -</span><span style="letter-spacing:0.494px"><span class="lnk"> jchamlin@s207.org</span></span></div>
<div class="a doc" style="left:678px;top:113.5px"><span style="letter-spacing:0.42px">Maria Leonor Murillo-</span></div>
<div class="a doc" style="left:678px;top:131.5px"><span style="letter-spacing:0.561px"><span class="lnk">mmurillo2@s207.org</span></span></div>
<div class="a doc" style="left:678px;top:149.5px"><span style="letter-spacing:0.248px">Olivia Krzyzak </span><span style="letter-spacing:0.531px"><span class="lnk">okrzyzak@s207.org</span></span></div>
<div class="a doc" style="left:228px;top:182.5px"><span style="letter-spacing:0.62px">5A</span></div>
<div class="a doc" style="left:607px;top:182.5px"><span style="letter-spacing:0.62px">6A</span></div>
<div class="a doc" style="left:295px;top:182.5px"><span style="letter-spacing:0.144px">Elbron Khido - </span><span style="letter-spacing:0.557px"><span class="lnk">ekhido@s207.org</span></span></div>
<div class="a doc" style="left:678px;top:182.5px"><span style="letter-spacing:0.007px">Maya Owca - </span><span style="letter-spacing:0.647px"><span class="lnk"><span class="sq">mowca@s207.org</span></span></span></div>
<div class="a doc" style="left:678px;top:200.5px"><span style="letter-spacing:0.154px">Logan Ortiz- </span><span style="letter-spacing:0.493px"><span class="lnk">aortiz2@s207.org</span></span></div>
<div class="a doc" style="left:228px;top:251.5px"><span style="letter-spacing:0.62px">5B</span></div>
<div class="a doc" style="left:607px;top:251.5px"><span style="letter-spacing:0.62px">6B</span></div>
<div class="a doc" style="left:678px;top:251.5px"><span style="letter-spacing:-0.03px">Ari Ortiz - </span><span style="letter-spacing:0.54px"><span class="lnk">aortiz3@s207.org</span></span></div>
<div class="a doc" style="left:678px;top:269.5px"><span style="letter-spacing:0.397px">Alyssa Stephen - </span><span style="letter-spacing:0.609px"><span class="lnk">astephen@s207.org</span></span></div>
<div class="a doc" style="left:228px;top:301.5px"><span style="letter-spacing:0.62px">5C</span></div>
<div class="a doc" style="left:607px;top:301.5px"><span style="letter-spacing:0.62px">6C</span></div>
<div class="a doc" style="left:295px;top:301.5px"><span style="letter-spacing:0.341px">Paige Leidolf- </span><span style="letter-spacing:0.567px"><span class="lnk">pleidolf@s207.org</span></span></div>
<div class="a doc" style="left:295px;top:319.5px"><span style="letter-spacing:0.5px">Yarden Amir yamir@s207.org</span></div>
<div class="a doc" style="left:295px;top:337.5px"><span style="letter-spacing:0.41px">Madison Story- mstory@s207.org</span></div>
<div class="a doc" style="left:678px;top:301.5px"><span style="letter-spacing:0.518px">Maribelle Catanaoan -</span></div>
<div class="a doc" style="left:678px;top:319.5px"><span style="letter-spacing:0.567px"><span class="lnk"><span class="sq">mcatanaoan1</span></span><span class="lnk">@s207.org</span></span></div>
<div class="a doc" style="left:678px;top:337.5px"><span style="letter-spacing:0.314px">Emily Wojnicki -</span></div>
<div class="a doc" style="left:678px;top:355.5px"><span style="letter-spacing:0.54px"><span class="lnk"><span class="sq">ewojnicki@s207.org</span></span></span></div>
<div class="a doc" style="left:228px;top:405.5px"><span style="letter-spacing:0.62px">7</span></div>
<div class="a doc" style="left:607px;top:405.5px"><span style="letter-spacing:0.62px">8</span></div>
<div class="a doc" style="left:678px;top:405.5px"><span style="letter-spacing:0.501px">Kateryna Voroshylkina -</span></div>
<div class="a doc" style="left:678px;top:423.5px"><span style="letter-spacing:0.593px"><span class="lnk">kvoroshylkina@s207.org</span></span></div>
</div>
<!--/TABLE-->

</body></html>
